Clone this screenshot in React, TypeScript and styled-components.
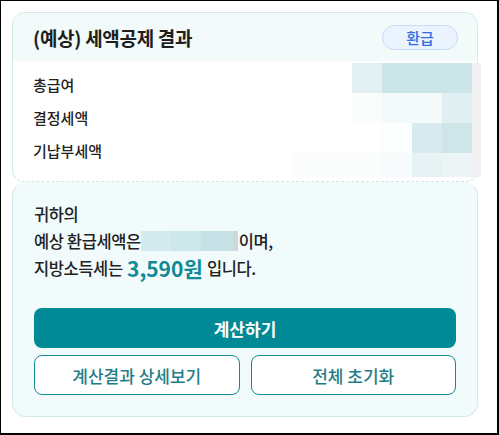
import React from 'react';
import styled, { createGlobalStyle } from 'styled-components';

const GlobalStyle = createGlobalStyle`
  * {
    box-sizing: border-box;
  }

  body {
    margin: 0;
    background: #ffffff;
    font-family: 'Noto Sans CJK KR', 'Noto Sans', sans-serif;
    color: #222222;
  }
`;

const rowMosaic: string[][] = [
  ['transparent', 'transparent', '#e3f0f2', '#cce5e9', '#cce5e9', '#cce5e9', '#f0f0f0'],
  ['transparent', 'transparent', '#fafcfc', '#f4f9fa', '#f4f9fa', '#e0eff2', '#f0f0f0'],
  ['transparent', 'transparent', '#ffffff', '#fcfdfd', '#d7ebee', '#cfe6e9', '#f0f0f0'],
  ['#fbfdfd', '#fbfdfd', '#fbfdfd', '#f7fbfb', '#e6f2f4', '#ecf4f5', '#f0f0f0'],
];

const inlineMosaic = [
  { w: 30, c: '#d4eaed' },
  { w: 30, c: '#cde7ea' },
  { w: 32, c: '#c6e2e6' },
  { w: 5, c: '#d6d6d6' },
];

const rows = ['총급여', '결정세액', '기납부세액'];

const App = () => {
  return (
    <>
      <GlobalStyle />
      <Frame>
        <Wrapper>
          <ResultCard>
            <CardHeader>
              <Title>(예상) 세액공제 결과</Title>
              <Badge>환급</Badge>
            </CardHeader>
            <CardBody>
              {rows.map((label) => (
                <Row key={label}>
                  <RowLabel>{label}</RowLabel>
                </Row>
              ))}
              <Mosaic>
                {rowMosaic.flat().map((color, i) => (
                  <MosaicCell key={i} $color={color} />
                ))}
              </Mosaic>
            </CardBody>
          </ResultCard>

          <SummaryCard>
            <Sentence>
              <Line>귀하의</Line>
              <Line>
                예상 환급세액은
                <InlineBlur>
                  {inlineMosaic.map((cell, i) => (
                    <BlurCell key={i} $width={cell.w} $color={cell.c} />
                  ))}
                </InlineBlur>
                이며,
              </Line>
              <Line>
                지방소득세는 <Amount>3,590원</Amount> 입니다.
              </Line>
            </Sentence>

            <Actions>
              <PrimaryButton>계산하기</PrimaryButton>
              <ButtonRow>
                <OutlineButton>계산결과 상세보기</OutlineButton>
                <OutlineButton>전체 초기화</OutlineButton>
              </ButtonRow>
            </Actions>
          </SummaryCard>
        </Wrapper>
      </Frame>
    </>
  );
};

const Frame = styled.div`
  width: 499px;
  height: 435px;
  border-style: solid;
  border-color: #000000;
  border-width: 1px 2px 2px 1px;
  padding: 11px;
`;

const Wrapper = styled.div`
  width: 466px;
  display: flex;
  flex-direction: column;
`;

const ResultCard = styled.section`
  border: 1px solid #d3e9ec;
  border-bottom: 1px dashed #cfe6ea;
  border-radius: 14px 14px 12px 12px;
  background: #ffffff;
`;

const CardHeader = styled.div`
  height: 48px;
  display: flex;
  align-items: center;
  justify-content: space-between;
  padding: 0 20px;
  background: #f2fafa;
  border-radius: 13px 13px 0 0;
`;

const Title = styled.h2`
  margin: 0;
  font-size: 19px;
  font-weight: 700;
  color: #1e1e1e;
  letter-spacing: -0.3px;
`;

const Badge = styled.span`
  width: 76px;
  height: 25px;
  display: flex;
  align-items: center;
  justify-content: center;
  margin-right: -1px;
  border: 1px solid #c8daf6;
  border-radius: 13px;
  background: #eaf3fe;
  color: #2f6ee0;
  font-size: 15px;
  font-weight: 500;
`;

const CardBody = styled.div`
  position: relative;
  padding: 7px 20px 14px;
`;

const Row = styled.div`
  height: 33px;
  display: flex;
  align-items: center;
`;

const RowLabel = styled.span`
  font-size: 15px;
  font-weight: 500;
  color: #222222;
`;

const Mosaic = styled.div`
  position: absolute;
  left: 279px;
  top: 2px;
  display: grid;
  grid-template-columns: repeat(6, 30px) 9px;
  grid-template-rows: 30px 30px 30px 24px;
`;

const MosaicCell = styled.div<{ $color: string }>`
  background: ${({ $color }) => $color};
`;

const SummaryCard = styled.section`
  padding: 17px 21px 21px;
  border: 1px solid #d3e9ec;
  border-top-color: transparent;
  border-radius: 14px;
  background: #f2fbfb;
`;

const Sentence = styled.div`
  display: flex;
  flex-direction: column;
`;

const Line = styled.p`
  margin: 0;
  height: 27px;
  display: flex;
  align-items: center;
  font-size: 16.5px;
  font-weight: 500;
  letter-spacing: -0.4px;
  color: #222222;
  white-space: pre;
`;

const InlineBlur = styled.span`
  display: inline-flex;
  height: 20px;
  margin: 0 1px 0 0;
`;

const BlurCell = styled.span<{ $width: number; $color: string }>`
  width: ${({ $width }) => $width}px;
  height: 100%;
  background: ${({ $color }) => $color};
`;

const Amount = styled.strong`
  margin: 0 1px;
  font-size: 21px;
  font-weight: 700;
  letter-spacing: 0;
  color: #0f8a96;
`;

const Actions = styled.div`
  margin-top: 27px;
  display: flex;
  flex-direction: column;
  gap: 7px;
`;

const PrimaryButton = styled.button`
  height: 40px;
  border: none;
  border-radius: 8px;
  background: #018a96;
  color: #ffffff;
  font-family: inherit;
  font-size: 17px;
  font-weight: 700;
`;

const ButtonRow = styled.div`
  display: grid;
  grid-template-columns: 1fr 1fr;
  gap: 11px;
`;

const OutlineButton = styled.button`
  height: 40px;
  border: 1px solid #138b96;
  border-radius: 8px;
  background: #ffffff;
  color: #1f7d87;
  font-family: inherit;
  font-size: 17px;
  font-weight: 500;
`;

export default App;
